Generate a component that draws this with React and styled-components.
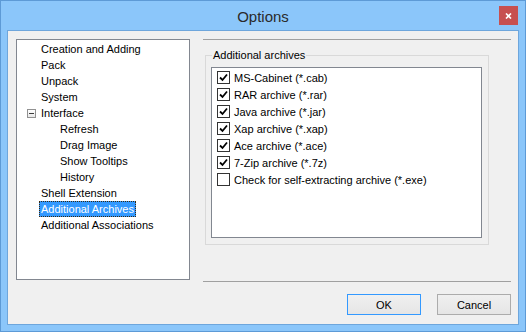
import React from 'react';
import styled, { createGlobalStyle } from 'styled-components';

const GlobalStyle = createGlobalStyle`
  html, body {
    margin: 0;
    padding: 0;
    background: #ffffff;
  }
  body {
    font-family: "Liberation Sans", Arial, sans-serif;
    font-size: 11px;
    color: #000;
  }
`;

const Window = styled.div`
  width: 526px;
  height: 332px;
  box-sizing: border-box;
  background: #8bc6fa;
  border: 1px solid #5d9ad6;
  padding: 0 6px 6px;
  display: flex;
  flex-direction: column;
`;

const TitleBar = styled.div`
  height: 29px;
  flex: none;
  display: grid;
  grid-template-columns: 1fr auto 1fr;
`;

const Title = styled.div`
  grid-column: 2;
  align-self: center;
  font-size: 15px;
  color: #2a2a2a;
  padding-top: 1px;
`;

const CloseButton = styled.div`
  grid-column: 3;
  justify-self: end;
  align-self: start;
  margin: 5px 1px 0 0;
  width: 19px;
  height: 19px;
  background: #c75050;
  display: flex;
  align-items: center;
  justify-content: center;
`;

const Client = styled.div`
  flex: 1;
  background: #f0f0f0;
  border: 1px solid #6ea6dc;
  padding: 8px 7px 0 8px;
  display: flex;
  flex-direction: column;
`;

const Main = styled.div`
  display: flex;
  height: 241px;
  gap: 13px;
`;

const Tree = styled.div`
  width: 174px;
  box-sizing: border-box;
  background: #fff;
  border: 1px solid #828790;
  padding-top: 1px;
`;

const TreeRow = styled.div`
  height: 16px;
  display: flex;
  align-items: center;
  padding-left: ${p => 6 + p.level * 19}px;
`;

const Slot = styled.div`
  width: 16px;
  flex: none;
  display: flex;
  align-items: center;
`;

const Expander = styled.div`
  width: 9px;
  height: 9px;
  box-sizing: border-box;
  margin-left: 4px;
  border: 1px solid #919191;
  background: linear-gradient(#ffffff, #e8e8e8);
  display: flex;
  align-items: center;
  justify-content: center;
  &::after {
    content: '';
    width: 5px;
    height: 1px;
    background: #3c3c3c;
  }
`;

const Label = styled.span`
  line-height: 14px;
  padding: 0 1px;
  border: 1px ${p => (p.selected ? 'dotted #3a2a10' : 'solid transparent')};
  background: ${p => (p.selected ? '#3399ff' : 'transparent')};
  color: ${p => (p.selected ? '#fff' : '#000')};
  white-space: nowrap;
`;

const Panel = styled.div`
  width: 308px;
  border-top: 1px solid #a0a0a0;
  padding-top: 15px;
`;

const Group = styled.div`
  margin-left: 2px;
  width: 284px;
  height: 190px;
  box-sizing: border-box;
  border: 1px solid #d9d9d9;
  padding: 0 6px 6px 5px;
  display: flex;
  flex-direction: column;
`;

const GroupLabel = styled.span`
  align-self: flex-start;
  margin: -8px 0 0 1px;
  padding: 0 1px;
  line-height: 14px;
  background: #f0f0f0;
`;

const CheckList = styled.div`
  flex: 1;
  margin-top: 5px;
  background: #fff;
  border: 1px solid #828790;
  padding: 1px 0 0 5px;
`;

const CheckRow = styled.div`
  height: 17px;
  display: flex;
  align-items: center;
  gap: 4px;
  white-space: nowrap;
`;

const Box = styled.div`
  width: 13px;
  height: 13px;
  box-sizing: border-box;
  border: 1px solid #333;
  background: #fff;
  display: flex;
  align-items: center;
  justify-content: center;
  flex: none;
`;

const Separator = styled.div`
  height: 1px;
  margin: 1px 0 0 187px;
  background: #a0a0a0;
`;

const Buttons = styled.div`
  display: flex;
  justify-content: flex-end;
  gap: 16px;
  margin-top: 12px;
`;

const Button = styled.div`
  width: 74px;
  height: 21px;
  box-sizing: border-box;
  border: 1px solid ${p => (p.primary ? '#3399ff' : '#acacac')};
  background: linear-gradient(#f0f0f0, #e5e5e5);
  display: flex;
  align-items: center;
  justify-content: center;
  color: #000;
`;

const treeItems = [
  { label: 'Creation and Adding', level: 0 },
  { label: 'Pack', level: 0 },
  { label: 'Unpack', level: 0 },
  { label: 'System', level: 0 },
  { label: 'Interface', level: 0, expanded: true },
  { label: 'Refresh', level: 1 },
  { label: 'Drag Image', level: 1 },
  { label: 'Show Tooltips', level: 1 },
  { label: 'History', level: 1 },
  { label: 'Shell Extension', level: 0 },
  { label: 'Additional Archives', level: 0, selected: true },
  { label: 'Additional Associations', level: 0 },
];

const archives = [
  { label: 'MS-Cabinet (*.cab)', checked: true },
  { label: 'RAR archive (*.rar)', checked: true },
  { label: 'Java archive (*.jar)', checked: true },
  { label: 'Xap archive (*.xap)', checked: true },
  { label: 'Ace archive (*.ace)', checked: true },
  { label: '7-Zip archive (*.7z)', checked: true },
  { label: 'Check for self-extracting archive (*.exe)', checked: false },
];

const CheckMark = () => (
  <svg width="9" height="9" viewBox="0 0 9 9">
    <path d="M1 4.5 L3.5 7 L8 1.5" fill="none" stroke="#000" strokeWidth="1.8" />
  </svg>
);

const CloseGlyph = () => (
  <svg width="7" height="6" viewBox="0 0 7 6">
    <path d="M1 0.5 L6 5.5 M6 0.5 L1 5.5" stroke="#fff" strokeWidth="1.6" />
  </svg>
);

export default function App() {
  return (
    <>
      <GlobalStyle />
      <Window>
        <TitleBar>
          <Title>Options</Title>
          <CloseButton>
            <CloseGlyph />
          </CloseButton>
        </TitleBar>
        <Client>
          <Main>
            <Tree>
              {treeItems.map(item => (
                <TreeRow key={item.label} level={item.level}>
                  <Slot>{item.expanded && <Expander />}</Slot>
                  <Label selected={item.selected}>{item.label}</Label>
                </TreeRow>
              ))}
            </Tree>
            <Panel>
              <Group>
                <GroupLabel>Additional archives</GroupLabel>
                <CheckList>
                  {archives.map(a => (
                    <CheckRow key={a.label}>
                      <Box>{a.checked && <CheckMark />}</Box>
                      <span>{a.label}</span>
                    </CheckRow>
                  ))}
                </CheckList>
              </Group>
            </Panel>
          </Main>
          <Separator />
          <Buttons>
            <Button primary>OK</Button>
            <Button>Cancel</Button>
          </Buttons>
        </Client>
      </Window>
    </>
  );
}
